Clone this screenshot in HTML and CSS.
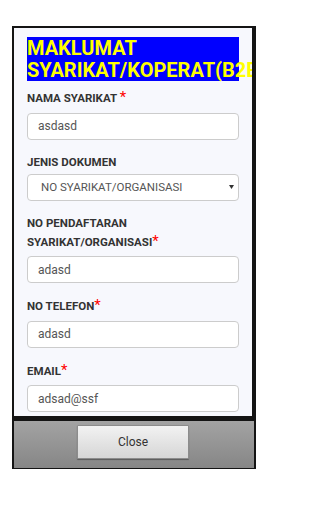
FILE: index.html
```html
<!DOCTYPE html>
<html lang="ms">
<head>
<meta charset="utf-8">
<title>Maklumat Syarikat</title>
<link rel="stylesheet" href="styles.css">
</head>
<body>
<div class="page">
  <div class="dialog">
    <div class="panel">
      <h1 class="title">MAKLUMAT SYARIKAT/KOPERAT(B2B)</h1>
      <div class="field first">
        <label class="label">NAMA SYARIKAT <span class="star">*</span></label>
        <input class="input" type="text" value="asdasd">
      </div>
      <div class="field">
        <label class="label plain">JENIS DOKUMEN</label>
        <div class="select">
          <span class="select-text">NO SYARIKAT/ORGANISASI</span>
          <svg class="arrow" width="5" height="4" viewBox="0 0 5 4"><path d="M0 0H5L2.5 4Z" fill="#333"/></svg>
        </div>
      </div>
      <div class="field">
        <label class="label">NO PENDAFTARAN<br>SYARIKAT/ORGANISASI<span class="star">*</span></label>
        <input class="input" type="text" value="adasd">
      </div>
      <div class="field">
        <label class="label">NO TELEFON<span class="star">*</span></label>
        <input class="input" type="text" value="adasd">
      </div>
      <div class="field">
        <label class="label">EMAIL<span class="star">*</span></label>
        <input class="input" type="text" value="adsad@ssf">
      </div>
    </div>
    <div class="footer">
      <button class="btn" type="button">Close</button>
    </div>
  </div>
</div>
</body>
</html>
```

FILE: styles.css
```css
html, body {
  margin: 0;
  padding: 0;
  background: #ffffff;
}

body {
  font-family: Roboto, "Liberation Sans", sans-serif;
}

.page {
  padding: 26px 0 0 12px;
}

.dialog {
  width: 244px;
  box-sizing: border-box;
  background: #141414;
  padding: 2px 2px 1px 2px;
  display: flex;
  flex-direction: column;
  gap: 5px;
}

.panel {
  height: 388px;
  margin-right: 2px;
  box-sizing: border-box;
  background: #f7f8fd;
  padding: 9px 13px 0 13px;
  overflow: hidden;
  display: flex;
  flex-direction: column;
}

.title {
  margin: 0 0 7px 0;
  flex: none;
  background: #0000ff;
  color: #ffff00;
  font-weight: 700;
  font-size: 20px;
  line-height: 22px;
}

.field {
  flex: none;
  margin-top: 13px;
}

.field.first {
  margin-top: 0;
}

.label {
  display: block;
  font-weight: 700;
  font-size: 11.5px;
  line-height: 18px;
  color: #333333;
  margin-bottom: 5.5px;
}

.label.plain {
  margin-bottom: 3px;
}

.star {
  color: #ff0000;
  font-size: 15px;
  font-weight: 400;
}

.input {
  display: block;
  width: 100%;
  height: 27px;
  box-sizing: border-box;
  margin: 0;
  border: 1px solid #cccccc;
  border-radius: 4px;
  background: #ffffff;
  padding: 0 10px;
  font-family: Roboto, "Liberation Sans", sans-serif;
  font-size: 12px;
  color: #555555;
  outline: none;
}

.select {
  display: flex;
  align-items: center;
  justify-content: space-between;
  height: 27px;
  box-sizing: border-box;
  border: 1px solid #cccccc;
  border-radius: 4px;
  background: #ffffff;
  padding: 0 4px 0 13px;
}

.select-text {
  font-size: 11.5px;
  color: #555555;
}

.arrow {
  display: block;
}

.footer {
  height: 47px;
  box-sizing: border-box;
  background: linear-gradient(#a3a3a3, #868686);
  display: flex;
  justify-content: center;
  align-items: flex-start;
  padding: 4px 2px 0 0;
}

.btn {
  width: 112px;
  height: 34px;
  margin: 0;
  padding: 0;
  border: 1px solid #8c8c8c;
  border-radius: 1px;
  background: linear-gradient(#f2f2f2, #d6d6d6);
  box-shadow: 0 1px 1px rgba(0, 0, 0, 0.35);
  font-family: Roboto, "Liberation Sans", sans-serif;
  font-size: 12px;
  color: #333333;
}
```
